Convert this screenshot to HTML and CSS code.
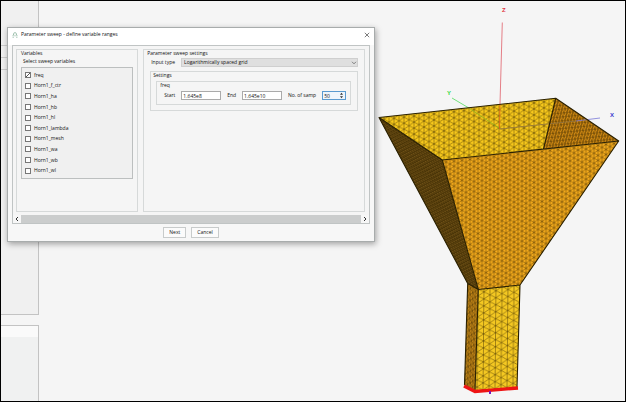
FILE: index.html
```html
<!DOCTYPE html>
<html lang="en">
<head>
<meta charset="utf-8">
<title>Parameter sweep</title>
<link rel="stylesheet" href="styles.css">
</head>
<body>
<main class="workspace">
  <aside class="dock">
    <div class="dock-panel dock-head"></div>
    <div class="dock-panel dock-row"></div>
    <div class="dock-panel dock-row"></div>
    <div class="dock-panel dock-tree"></div>
    <div class="dock-panel dock-details"></div>
  </aside>

  <section class="viewport">
    <svg class="model" viewBox="370 1 255 400" preserveAspectRatio="xMaxYMid meet" role="img" aria-label="Horn antenna mesh">
      <defs>
        <pattern id="mesh-back" width="10" height="6" patternUnits="userSpaceOnUse" patternTransform="matrix(1 -0.11 0 1 379 117)">
          <path class="wire" d="M0 0V6M5 0V6M10 0V6M0 0L10 6M0 6L10 0"/>
        </pattern>
        <pattern id="mesh-front" width="8" height="5" patternUnits="userSpaceOnUse" patternTransform="matrix(1 -0.11 0 1 442 160)">
          <path class="wire" d="M0 0V5M4 0V5M8 0V5M0 0L8 5M0 5L8 0"/>
        </pattern>
        <pattern id="mesh-side" width="5" height="4" patternUnits="userSpaceOnUse" patternTransform="matrix(1 0.68 -0.25 1 556 98)">
          <path class="wire" d="M0 0V4M2.5 0V4M5 0V4M0 0L5 4M0 4L5 0"/>
        </pattern>
        <pattern id="mesh-left" width="3" height="3" patternUnits="userSpaceOnUse" patternTransform="matrix(1 0.68 0.3 1 379 117)">
          <path class="wire" d="M0 0V3M1.5 0V3M0 0L3 3M0 3L3 0"/>
        </pattern>
        <pattern id="mesh-neck" width="12" height="7" patternUnits="userSpaceOnUse" patternTransform="matrix(1 -0.1 -0.01 1 478 289)">
          <path class="wire" d="M0 0V7M6 0V7M12 0V7M0 0L12 7M0 7L12 0"/>
        </pattern>
        <pattern id="mesh-neck-left" width="5" height="6" patternUnits="userSpaceOnUse" patternTransform="matrix(1 0.55 -0.03 1 468 284)">
          <path class="wire" d="M0 0V6M2.5 0V6M5 0V6M0 0L5 6M0 6L5 0"/>
        </pattern>
      </defs>

      <g class="face">
        <path fill="#f8c91c" d="M379 117.5L555.7 98.3L543.5 149L442.3 160Z"/>
        <path fill="url(#mesh-back)" d="M379 117.5L555.7 98.3L543.5 149L442.3 160Z"/>
        <path fill="#d48c14" d="M555.7 98.3L618.7 141L543.5 149Z"/>
        <path fill="url(#mesh-side)" d="M555.7 98.3L618.7 141L543.5 149Z"/>
      </g>
      <g class="axis">
        <path stroke="#e0606a" d="M502.3 22.5L500 104"/>
        <path stroke="#e2601c" d="M500 104L499.5 129"/>
        <path stroke="#52dc5a" d="M452 98L468 107.5"/>
        <path stroke="#8db51c" d="M468 107.5L499 128"/>
        <path stroke="#8c7040" d="M499.5 129L576 121"/>
        <path stroke="#7878d8" d="M576 121L600 118"/>
      </g>
      <g class="face">
        <path fill="#6e5016" d="M379 117.5L442.3 160L478.3 289.5L467.7 283.5Z"/>
        <path fill="url(#mesh-left)" d="M379 117.5L442.3 160L478.3 289.5L467.7 283.5Z"/>
        <path fill="#f6ac1c" d="M442.3 160L618.7 141L520 285L478.3 289.5Z"/>
        <path fill="url(#mesh-front)" d="M442.3 160L618.7 141L520 285L478.3 289.5Z"/>
        <path fill="#c48718" d="M467.7 283.5L478.3 289.5L475 391L464.5 385Z"/>
        <path fill="url(#mesh-neck-left)" d="M467.7 283.5L478.3 289.5L475 391L464.5 385Z"/>
        <path fill="#f4c822" d="M478.3 289.5L520 285L517 387L475 391Z"/>
        <path fill="url(#mesh-neck)" d="M478.3 289.5L520 285L517 387L475 391Z"/>
      </g>
      <path class="edge" d="M379 117.5L555.7 98.3L618.7 141L442.3 160ZM555.7 98.3L543.5 149M379 117.5L467.7 283.5L464.5 385M442.3 160L478.3 289.5L475 391M618.7 141L520 285L517 387M467.7 283.5L478.3 289.5L520 285"/>
      <path class="port" d="M464 386L475 391.5L518 388"/>
      <path fill="#7a18b8" d="M489 391h2v3h-2z"/>
      <text class="axis-label" x="502" y="12" fill="#e0303c">Z</text>
      <text class="axis-label" x="447" y="95" fill="#30d83c">Y</text>
      <text class="axis-label" x="610" y="117" fill="#3838d0">X</text>
    </svg>
  </section>

  <section class="dialog" role="dialog" aria-labelledby="dialog-title">
    <header class="titlebar">
      <svg class="app-icon" viewBox="0 0 6 6" aria-hidden="true"><path d="M1.6 3V2Q1.6 .6 3 .6T4.4 2V3M.5 3.6L1.6 2.8L2.4 4.2M5.5 3.6L4.4 2.8L3.6 4.2M.5 5.2H2M4 5.2H5.5"/></svg>
      <h1 class="title" id="dialog-title">Parameter sweep - define variable ranges</h1>
      <button class="close" aria-label="Close"><svg viewBox="0 0 6 6" aria-hidden="true"><path d="M.8 .8L5.2 5.2M5.2 .8L.8 5.2"/></svg></button>
    </header>

    <div class="scroll-frame">
      <div class="columns">
        <fieldset class="group variables">
          <legend>Variables</legend>
          <p class="hint">Select sweep variables</p>
          <div class="var-list">
            <label><input type="checkbox" checked>freq</label>
            <label><input type="checkbox">Horn1_f_ctr</label>
            <label><input type="checkbox">Horn1_ha</label>
            <label><input type="checkbox">Horn1_hb</label>
            <label><input type="checkbox">Horn1_hl</label>
            <label><input type="checkbox">Horn1_lambda</label>
            <label><input type="checkbox">Horn1_mesh</label>
            <label><input type="checkbox">Horn1_wa</label>
            <label><input type="checkbox">Horn1_wb</label>
            <label><input type="checkbox">Horn1_wl</label>
          </div>
        </fieldset>

        <fieldset class="group settings">
          <legend>Parameter sweep settings</legend>
          <div class="type-row">
            <label for="input-type">Input type</label>
            <span class="select-wrap">
              <select id="input-type"><option>Logarithmically spaced grid</option></select>
              <svg class="chevron" viewBox="0 0 6 4" aria-hidden="true"><path d="M1 .8L3 2.8L5 .8"/></svg>
            </span>
          </div>
          <fieldset class="group inner">
            <legend>Settings</legend>
            <fieldset class="group range">
              <legend>freq</legend>
              <div class="range-row">
                <label for="start">Start</label>
                <input id="start" type="text" value="1.645e8">
                <label for="end">End</label>
                <input id="end" type="text" value="1.645e10">
                <label for="samples">No. of samp</label>
                <span class="spin">
                  <input id="samples" type="text" inputmode="numeric" value="50">
                  <svg class="spin-arrows" viewBox="0 0 5 7" aria-hidden="true"><path d="M1 2.8L2.5 .8L4 2.8ZM1 4.2L2.5 6.2L4 4.2Z"/></svg>
                </span>
              </div>
            </fieldset>
          </fieldset>
        </fieldset>
      </div>
      <div class="scrollbar">
        <button aria-label="Scroll left"><svg viewBox="0 0 4 6" aria-hidden="true"><path d="M3 1L1 3L3 5"/></svg></button>
        <span class="thumb"></span>
        <button aria-label="Scroll right"><svg viewBox="0 0 4 6" aria-hidden="true"><path d="M1 1L3 3L1 5"/></svg></button>
      </div>
    </div>

    <footer class="actions">
      <button class="btn">Next</button>
      <button class="btn">Cancel</button>
    </footer>
  </section>
</main>
</body>
</html>
```
FILE: styles.css
```css
* { box-sizing: border-box; }

body {
  margin: 0;
  font: 5px/7px "Open Sans", "Noto Sans", sans-serif;
  color: #111;
}

input, select, button { font: inherit; color: inherit; margin: 0; padding: 0; }
button { cursor: pointer; }

.workspace {
  position: relative;
  display: grid;
  grid-template-columns: 38px 1fr;
  height: 100vh;
  border: 1px solid #000;
  background: #f5f5f5;
  overflow: hidden;
}

/* Left dock, mostly behind the dialog */
.dock { display: flex; flex-direction: column; }
.dock-panel { border-right: 1px solid #c3c3c3; background: #f0f0f0; }
.dock-head { height: 45px; border-bottom: 1px solid #ccc; }
.dock-row { height: 12px; border-bottom: 1px solid #ccc; }
.dock-tree { height: 245px; border-bottom: 1px solid #c3c3c3; }
.dock-details {
  flex: 1;
  margin-top: 10px;
  border-top: 1px solid #c3c3c3;
  background: linear-gradient(#fafafa 11px, #f0f1f1 11px);
}

/* 3D view */
.viewport { display: flex; justify-content: flex-end; min-width: 0; height: 100%; min-height: 0; }
.model { display: block; height: 100%; max-width: 100%; }
.wire { fill: none; stroke: #3a2800; stroke-width: 0.6; stroke-opacity: 0.7; }
.edge { fill: none; stroke: #2a2000; stroke-width: 1.1; stroke-linejoin: round; }
.axis { fill: none; stroke-width: 0.8; }
.port { fill: none; stroke: #ee1414; stroke-width: 3.4; }
.axis-label { font: bold 6px "Liberation Sans", sans-serif; }

/* Dialog */
.dialog {
  position: absolute;
  left: 6px;
  top: 26px;
  width: 59%;
  display: flex;
  flex-direction: column;
  border: 1px solid #a8acac;
  background: #f7f7f7;
  box-shadow: 1px 2px 6px rgba(0, 0, 0, 0.35);
}

.titlebar { display: flex; align-items: center; height: 17px; padding: 0 4px 4px; gap: 3px; background: #fff; }
.title { flex: 1; margin: 0; font-size: 5px; font-weight: 400; }
.app-icon { width: 6px; height: 6px; fill: none; stroke: #6fa287; stroke-width: 0.6; }
.close { width: 6px; height: 6px; border: 0; background: none; display: flex; }
.close svg { width: 6px; height: 6px; fill: none; stroke: #444; stroke-width: 0.7; }

.scroll-frame { margin: 0 4px; border: 1px solid #c0c4c4; background: #f5f5f5; }
.columns { display: flex; gap: 5px; height: 169px; padding: 3px 4px 3px 3px; }

.group { min-width: 0; margin: 0; padding: 0; border: 1px solid #d6d9d9; background: #f5f5f5; }
.group > legend { float: left; width: 100%; padding: 0; }

.variables { width: 35%; padding: 0 4px; display: flex; flex-direction: column; }
.hint { clear: both; margin: 1px 0 2px; padding-left: 2px; }
.var-list {
  display: grid;
  grid-auto-rows: 1fr;
  height: 112px;
  padding: 2px 3px;
  border: 1px solid #bcbfbf;
  background: #f0f0f0;
}
.var-list label { display: flex; align-items: center; gap: 3px; }
.var-list input {
  appearance: none;
  width: 6px;
  height: 6px;
  border: 1px solid #777;
  background: #fff;
}
.var-list input:checked {
  background: #fff linear-gradient(-45deg, transparent 42%, #555 42%, #555 58%, transparent 58%);
}

.settings { flex: 1; padding: 0 6px; }
.settings > legend { margin-left: -3px; }
.type-row { clear: both; display: flex; align-items: center; gap: 6px; padding-top: 1px; }
.select-wrap { position: relative; flex: 1; display: flex; }
select {
  appearance: none;
  width: 100%;
  height: 9px;
  padding: 0 2px;
  border: 1px solid #cfcfcf;
  border-radius: 0;
  background: #dfdfdf;
}
.type-row label { padding-left: 1px; }
.chevron { position: absolute; right: 1px; top: 3px; width: 6px; height: 4px; fill: none; stroke: #555; stroke-width: 0.7; }

.inner { margin-top: 4px; padding: 0 6px 5px 5px; }
.inner > legend { margin-left: -3px; }
.range { clear: both; padding: 0 4px 4px; margin-top: 1px; }
.range > legend { margin-left: -1px; }
.inner > .range { margin-top: 9px; }
.range-row { clear: both; display: flex; align-items: center; gap: 6px; padding: 2px 0 0 3px; }
.range-row input { flex: 1; width: 0; min-width: 0; height: 9px; padding: 0 1px; border: 1px solid #aaa; border-radius: 0; background: #fff; }
.spin { position: relative; display: flex; width: 24px; }
.range-row .spin input { border-color: #5a9ad0; background: #eef5fc; }
.spin-arrows { position: absolute; right: 2px; top: 1px; width: 5px; height: 7px; fill: #333; }

.scrollbar { display: flex; height: 8px; background: #f7f7f7; }
.scrollbar button { display: flex; align-items: center; justify-content: center; width: 8px; border: 0; background: #f7f7f7; }
.scrollbar svg { width: 4px; height: 6px; fill: none; stroke: #333; }
.thumb { flex: 1; background: #cbcdcd; }

.actions { display: flex; justify-content: center; gap: 5px; padding: 3px 0; }
.btn { height: 11px; padding: 0 5px; border: 1px solid #c8cbcb; background: #fbfbfb; }
```
